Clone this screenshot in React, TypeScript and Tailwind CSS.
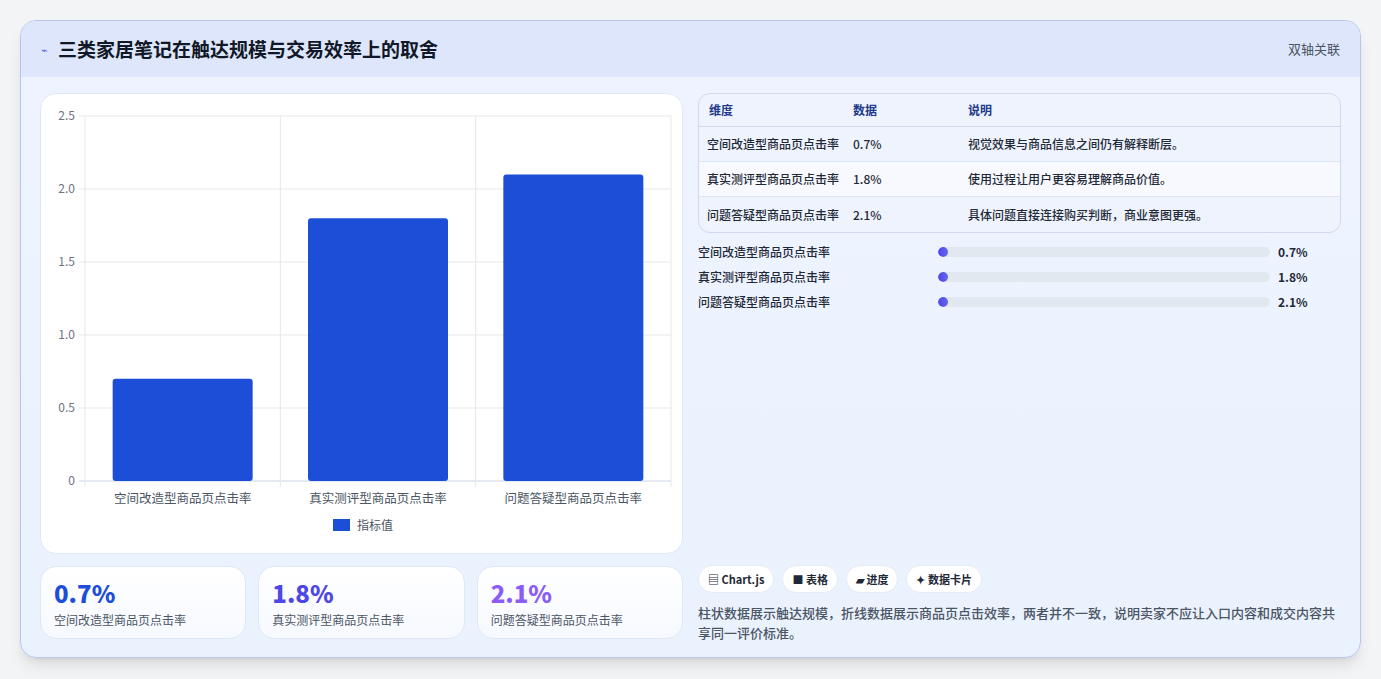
const rows = [
  { name: '空间改造型商品页点击率', v: 0.7, note: '视觉效果与商品信息之间仍有解释断层。' },
  { name: '真实测评型商品页点击率', v: 1.8, note: '使用过程让用户更容易理解商品价值。' },
  { name: '问题答疑型商品页点击率', v: 2.1, note: '具体问题直接连接购买判断，商业意图更强。' },
];

const font = { fontFamily: '"Noto Sans CJK SC", "Noto Sans", sans-serif' };

function Chart() {
  // plot area: x 44..630, y 22..387 within svg
  const x0 = 44, x1 = 630, yTop = 22, yBot = 387;
  const yOf = (v: number) => yBot - (v / 2.5) * (yBot - yTop);
  const colW = (x1 - x0) / 3;
  return (
    <svg width="643" height="460" className="block">
      {[0, 0.5, 1, 1.5, 2, 2.5].map((t) => (
        <g key={t}>
          <line x1={x0 - 6} x2={x1} y1={yOf(t)} y2={yOf(t)} stroke={t === 0 ? '#cbd5e1' : '#e5e7eb'} />
          <text x={x0 - 10} y={yOf(t) + 4} textAnchor="end" fontSize="12" fill="#6b7280">{t === 0 ? '0' : t.toFixed(1)}</text>
        </g>
      ))}
      {[0, 1, 2, 3].map((i) => (
        <line key={i} x1={x0 + i * colW} x2={x0 + i * colW} y1={yTop} y2={yBot + 6} stroke="#e5e7eb" />
      ))}
      {rows.map((r, i) => {
        const cx = x0 + colW * (i + 0.5);
        return (
          <g key={r.name}>
            <rect x={cx - 70} y={yOf(r.v)} width="140" height={yBot - yOf(r.v)} rx="3" fill="#1d4ed8" />
            <text x={cx} y={409} textAnchor="middle" fontSize="12.5" fill="#4b5563">{r.name}</text>
          </g>
        );
      })}
      <rect x="292" y="425" width="17" height="12" fill="#1d4ed8" />
      <text x="316" y="436" fontSize="12" fill="#4b5563">指标值</text>
    </svg>
  );
}

export default function App() {
  const numColors = ['text-[#1d4ed8]', 'text-[#4f46e5]', 'text-[#8b5cf6]'];
  return (
    <div className="w-[1381px] h-[679px] bg-[#f3f4f6] pt-[20px] px-[20px]" style={font}>
      <div className="h-[638px] rounded-2xl border border-[#b9c6ec] bg-gradient-to-b from-[#eef3ff] to-[#eaf2fe] shadow-lg overflow-hidden flex flex-col">
        <div className="h-[56px] bg-[#dde6fb] flex items-center justify-between px-[20px]">
          <div className="flex items-center gap-[10px]">
            <span className="text-[#4f63d8] text-[11px]">⌁</span>
            <span className="text-[19px] font-bold text-[#111827]">三类家居笔记在触达规模与交易效率上的取舍</span>
          </div>
          <span className="text-[13px] text-[#4b5563]">双轴关联</span>
        </div>
        <div className="flex gap-[15px] px-[19px] pt-[16px]">
          <div className="w-[643px] flex flex-col gap-[12px]">
            <div className="h-[461px] rounded-2xl bg-white border border-[#e0e7f5]">
              <Chart />
            </div>
            <div className="grid grid-cols-3 gap-[12px]">
              {rows.map((r, i) => (
                <div key={r.name} className="h-[73px] rounded-2xl bg-gradient-to-b from-white to-[#f6f9ff] border border-[#e0e7f5] px-[13px] pt-[10px]">
                  <div className={`text-[24px] font-extrabold leading-[32px] ${numColors[i]}`}>{r.v}%</div>
                  <div className="text-[12px] text-[#4b5563] mt-[2px]">{r.name}</div>
                </div>
              ))}
            </div>
          </div>
          <div className="flex-1 flex flex-col">
            <div className="rounded-xl border border-[#cfd8ee] overflow-hidden text-[12px] bg-[#eef3fd]">
              <div className="flex h-[33px] items-center border-b border-[#cfd8ee] text-[#1e3a8a] font-semibold">
                <div className="w-[154px] pl-[10px]">维度</div>
                <div className="w-[115px]">数据</div>
                <div>说明</div>
              </div>
              {rows.map((r, i) => (
                <div key={r.name} className={`flex h-[35px] items-center text-[#1f2937] font-medium ${i < 2 ? 'border-b border-[#dde4f3]' : ''} ${i === 1 ? 'bg-[#f7f9fe]' : ''}`}>
                  <div className="w-[154px] pl-[8px]">{r.name}</div>
                  <div className="w-[115px]">{r.v}%</div>
                  <div>{r.note}</div>
                </div>
              ))}
            </div>
            <div className="flex flex-col gap-[7px] mt-[10px] text-[12px] text-[#1f2937] font-medium">
              {rows.map((r) => (
                <div key={r.name} className="flex items-center h-[18px]">
                  <div className="w-[240px]">{r.name}</div>
                  <div className="w-[332px] h-[10px] rounded-full bg-[#e2e8f0] overflow-hidden">
                    <div className="h-full rounded-full bg-gradient-to-r from-[#4f46e5] to-[#6366f1]" style={{ width: `${Math.max(r.v / 100 * 332, 10)}px` }} />
                  </div>
                  <div className="ml-[8px] font-bold">{r.v}%</div>
                </div>
              ))}
            </div>
            <div className="flex-1" />
            <div className="flex gap-[8px] text-[11px] font-semibold text-[#1f2937] mt-[254px]">
              <span className="h-[28px] px-[9px] rounded-full bg-white border border-[#e5eaf5] flex items-center">▤ Chart.js</span>
              <span className="h-[28px] px-[9px] rounded-full bg-white border border-[#e5eaf5] flex items-center">■ 表格</span>
              <span className="h-[28px] px-[9px] rounded-full bg-white border border-[#e5eaf5] flex items-center">▰ 进度</span>
              <span className="h-[28px] px-[9px] rounded-full bg-white border border-[#e5eaf5] flex items-center">✦ 数据卡片</span>
            </div>
            <p className="mt-[10px] text-[13px] leading-[20px] text-[#4b5563] font-medium pr-[4px]">
              柱状数据展示触达规模，折线数据展示商品页点击效率，两者并不一致，说明卖家不应让入口内容和成交内容共享同一评价标准。
            </p>
          </div>
        </div>
      </div>
    </div>
  );
}
